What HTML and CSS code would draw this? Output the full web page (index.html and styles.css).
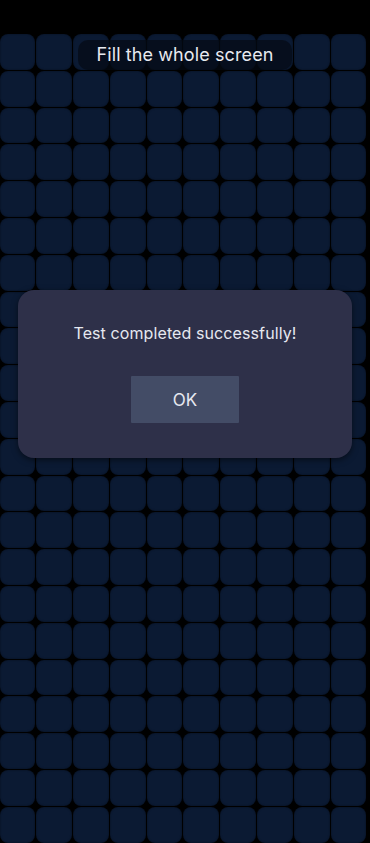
FILE: index.html
```html
<!DOCTYPE html>
<html>
<head>
<meta charset="utf-8">
<link rel="stylesheet" href="styles.css">
</head>
<body>
<div class="screen">
  <div class="grid" id="grid"></div>
  <div class="title">Fill the whole screen</div>
  <div class="dialog">
    <p class="message">Test completed successfully!</p>
    <button class="ok">OK</button>
  </div>
</div>
<script>
  var g = document.getElementById('grid');
  for (var i = 0; i < 230; i++) {
    var d = document.createElement('div');
    d.className = 'tile';
    g.appendChild(d);
  }
</script>
</body>
</html>
```
FILE: styles.css
```css
html, body {
  margin: 0;
  padding: 0;
  background: #000;
  height: 100%;
  overflow: hidden;
}
.screen {
  position: relative;
  width: 370px;
  height: 843px;
  overflow: hidden;
  font-family: Inter, "Noto Sans", sans-serif;
}
.grid {
  display: grid;
  grid-template-columns: repeat(10, 35.8px);
  grid-auto-rows: 35.8px;
  gap: 1px;
  padding-top: 34px;
  margin-left: -0.5px;
}
.tile {
  background: #0b1a33;
  border-radius: 8px;
  box-shadow: inset 0 0 2px rgba(0,0,0,0.5);
}
.title {
  position: absolute;
  top: 40px;
  left: 78px;
  width: 214px;
  height: 30px;
  border-radius: 10px;
  background: rgba(4, 10, 20, 0.7);
  color: #e8eaf0;
  font-size: 18px;
  line-height: 30px;
  text-align: center;
  letter-spacing: 0.1px;
}
.dialog {
  position: absolute;
  top: 290px;
  left: 18px;
  width: 334px;
  height: 168px;
  box-sizing: border-box;
  border-radius: 16px;
  background: #2e3049;
  box-shadow: 0 2px 6px rgba(0,0,0,0.5);
  display: flex;
  flex-direction: column;
  align-items: center;
  padding-top: 32px;
}
.message {
  margin: 0;
  color: #e6e8f0;
  font-size: 16px;
  line-height: 22px;
  letter-spacing: 0.1px;
}
.ok {
  margin-top: 32px;
  width: 108px;
  height: 47px;
  border: none;
  border-radius: 1px;
  background: #434c66;
  color: #e6e8f0;
  font-family: Inter, "Noto Sans", sans-serif;
  font-size: 17px;
  padding: 0;
}
```
